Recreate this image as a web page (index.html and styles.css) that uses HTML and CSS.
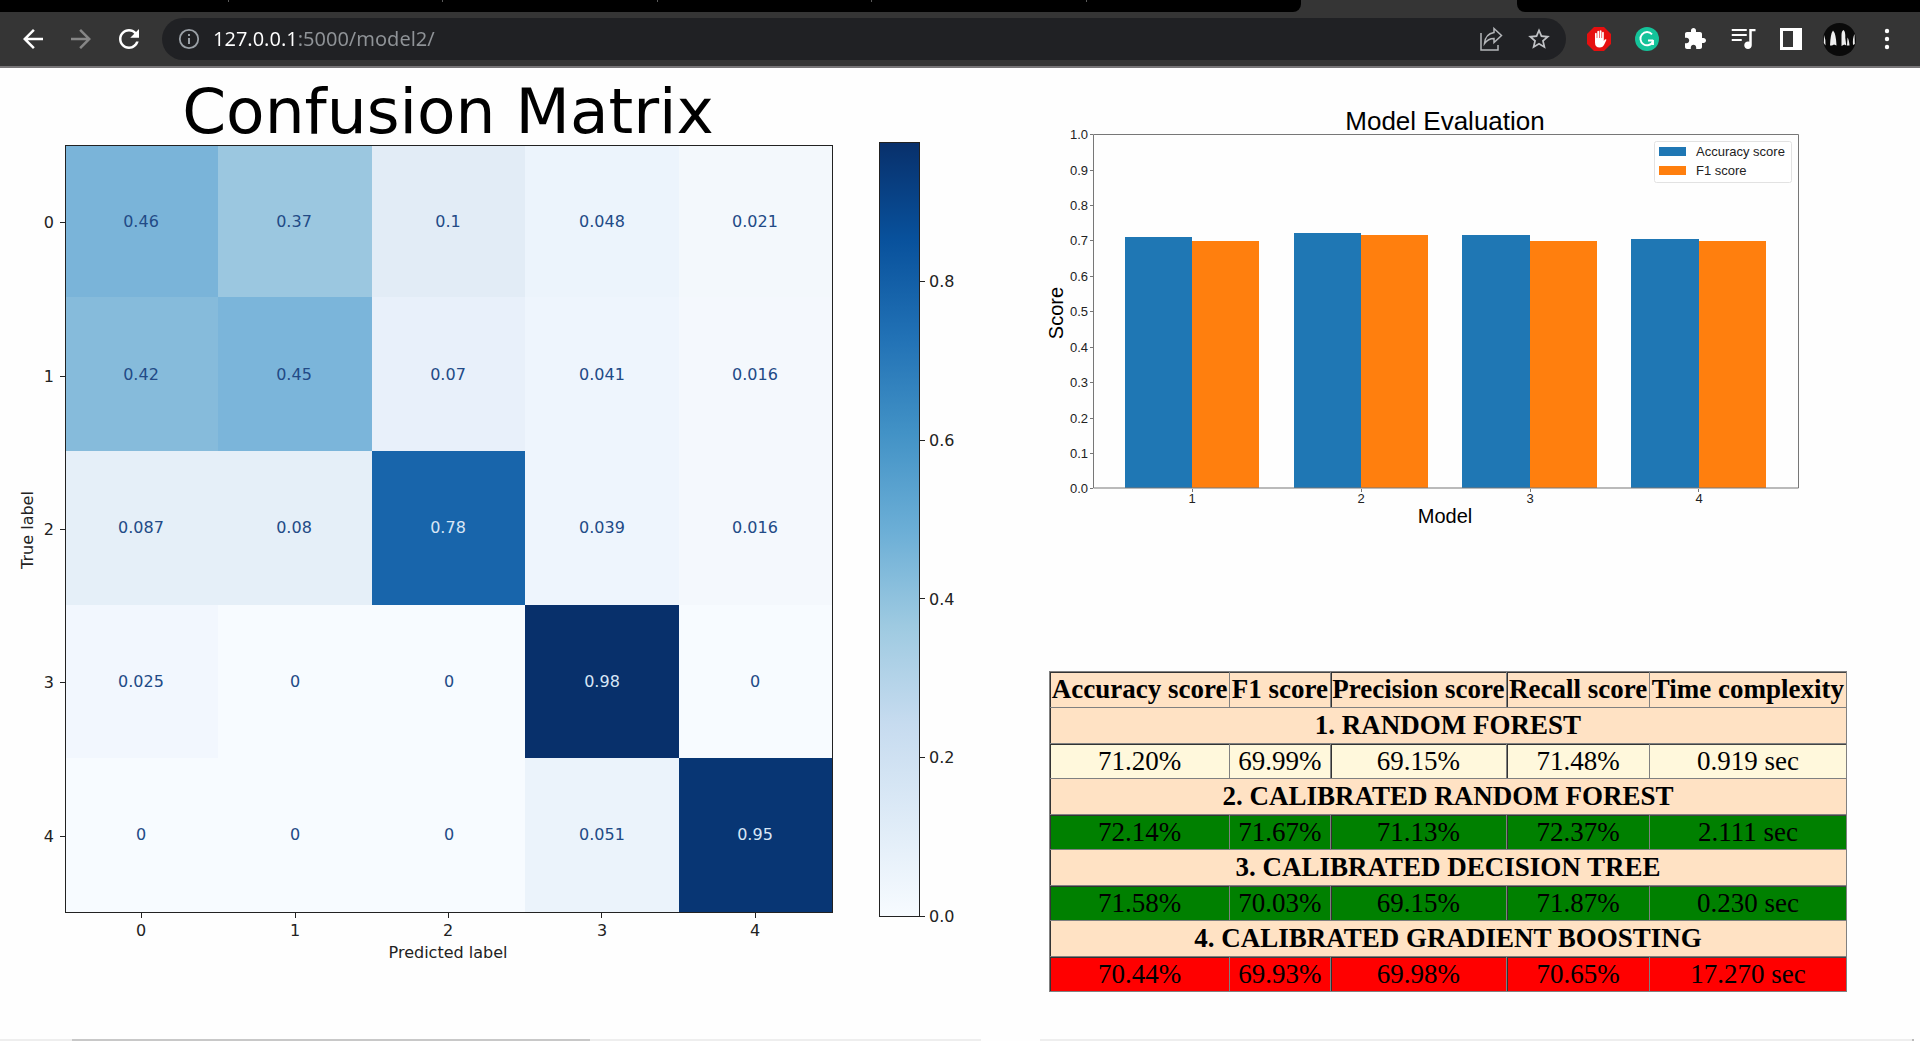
FILE: index.html
```html
<!DOCTYPE html>
<html lang="en">
<head>
<meta charset="utf-8">
<meta name="viewport" content="width=device-width, initial-scale=1">
<title>Model evaluation</title>
<link rel="stylesheet" href="styles.css">
</head>
<body>
<header class="browser">
  <div class="tabs">
    <div class="tabs-before"><span class="tab"></span><span class="tab"></span><span class="tab"></span><span class="tab"></span><span class="tab"></span><span class="tab"></span></div>
    <div class="tab-active"></div>
    <div class="tabs-after"></div>
  </div>
  <div class="toolbar">
    <div class="group">
      <button class="icon-button" type="button" aria-label="Back"><svg width="30" height="30" viewBox="0 0 24 24" fill="#fff"><path d="M20 11H7.83l5.59-5.59L12 4l-8 8 8 8 1.41-1.41L7.83 13H20v-2z"/></svg></button>
      <button class="icon-button" type="button" aria-label="Forward"><svg width="30" height="30" viewBox="0 0 24 24" fill="#868686"><path d="M4 11h12.17l-5.59-5.59L12 4l8 8-8 8-1.41-1.41L16.17 13H4v-2z"/></svg></button>
      <button class="icon-button" type="button" aria-label="Reload"><svg width="30" height="30" viewBox="0 0 24 24" fill="#fff"><path d="M17.65 6.35C16.2 4.9 14.21 4 12 4c-4.42 0-7.99 3.58-7.99 8s3.57 8 7.99 8c3.73 0 6.84-2.55 7.73-6h-2.08c-.82 2.33-3.04 4-5.65 4-3.31 0-6-2.69-6-6s2.69-6 6-6c1.66 0 3.14.69 4.22 1.78L13 11h7V4l-2.35 2.35z"/></svg></button>
    </div>
    <div class="omnibox">
      <button class="icon-button" type="button" aria-label="Site information"><svg width="24" height="24" viewBox="0 0 24 24"><circle cx="12" cy="12" r="9.2" fill="none" stroke="#9aa0a6" stroke-width="1.8"/><path fill="#9aa0a6" d="M11 7h2v2h-2zM11 11h2v6h-2z"/></svg></button>
      <input class="address" type="text" aria-label="Address" value="127.0.0.1:5000/model2/">
      <button class="icon-button" type="button" aria-label="Share"><svg width="24" height="28" viewBox="0 0 24 28" fill="none" stroke="#b4b6b9" stroke-width="1.5"><path d="M2 8v17h17v-5"/><path d="M15 3.500l7.500 7-7.500 7v-4c-4 0-7 1.500-9.500 5 .5-6 3.500-10 9.500-11z"/></svg></button>
      <button class="icon-button" type="button" aria-label="Bookmark"><svg width="26" height="26" viewBox="0 0 24 24" fill="#c0c2c5"><path d="M22 9.240l-7.190-.62L12 2 9.190 8.630 2 9.240l5.460 4.730L5.820 21 12 17.270 18.180 21l-1.630-7.030L22 9.240zM12 15.400l-3.760 2.270 1-4.280-3.320-2.880 4.380-.38L12 6.100l1.710 4.040 4.380.38-3.320 2.880 1 4.280L12 15.400z"/></svg></button>
    </div>
    <div class="group">
      <button class="icon-button" type="button" aria-label="Ad blocker"><svg width="24" height="24" viewBox="0 0 24 24"><path fill="#e60f0f" d="M7 0h10l7 7v10l-7 7H7l-7-7V7z"/><path fill="#fff" d="M8 13V6.500q1-1.300 1.700 0V11h.6V4.500q1-1.300 1.800 0V11h.6V3.800q1-1.300 1.800 0V11h.6V5.500q1-1.300 1.700 0V14l1-1.500q1.300-.8 1.700.3L17.500 17q-1.500 3.500-4.800 3.500Q8 20.500 8 15.500z"/></svg></button>
      <button class="icon-button" type="button" aria-label="Writing assistant"><svg width="24" height="24" viewBox="0 0 24 24"><circle cx="12" cy="12" r="12" fill="#15c39a"/><path d="M17 7.300A6.600 6.600 0 1 0 18 14.500M13 13.500h5.200M18 13v5" fill="none" stroke="#fff" stroke-width="1.900"/></svg></button>
      <button class="icon-button" type="button" aria-label="Extensions"><svg width="24" height="24" viewBox="0 0 24 24" fill="#fff"><path d="M20.500 11H19V7c0-1.100-.9-2-2-2h-4V3.500C13 2.120 11.880 1 10.500 1S8 2.120 8 3.500V5H4c-1.100 0-1.990.9-1.990 2v3.800H3.500c1.490 0 2.700 1.210 2.700 2.700s-1.210 2.700-2.700 2.700H2V20c0 1.100.9 2 2 2h3.800v-1.500c0-1.490 1.210-2.700 2.700-2.700 1.490 0 2.700 1.210 2.700 2.700V22H17c1.100 0 2-.9 2-2v-4h1.500c1.380 0 2.500-1.120 2.500-2.500S21.880 11 20.500 11z"/></svg></button>
      <button class="icon-button" type="button" aria-label="Media control"><svg width="30" height="30" viewBox="0 0 24 24" fill="#fff"><path d="M15 4H3v1.500h12V4zm0 4H3v1.500h12V8zM3 13.500h8V12H3v1.500zM17 4v10.180c-.31-.11-.65-.18-1-.18-1.660 0-3 1.340-3 3s1.340 3 3 3 3-1.340 3-3V5.700h3V4h-5z"/></svg></button>
      <button class="icon-button" type="button" aria-label="Side panel"><svg width="22" height="22" viewBox="0 0 22 22"><path fill="#fff" fill-rule="evenodd" d="M0 0h22v22H0zM3 3v16h10V3z"/></svg></button>
      <button class="icon-button" type="button" aria-label="Profile"><svg width="33" height="33" viewBox="0 0 33 33"><circle cx="16.500" cy="16.500" r="16.500" fill="#0a0a0a"/><path fill="#eee" d="M1 12q2 5 1.500 10.500L.8 20zM7 22.500q.5-12 3-15 3 3 3.500 15l-2.500-1-2 1zM18.500 23V12q0-4 2-5 2 1 1.800 8l1 7.500-2-1zM24 22.500l.5-8q1.500 2 2 8zM31.500 11q-2 4-1.500 11l1.800-1z"/></svg></button>
      <button class="icon-button" type="button" aria-label="Menu"><svg width="6" height="22" viewBox="0 0 6 22" fill="#fff"><circle cx="3" cy="3" r="2.200"/><circle cx="3" cy="11" r="2.200"/><circle cx="3" cy="19" r="2.200"/></svg></button>
    </div>
  </div>
</header>

<main class="page">
  <section class="pane">
    <svg class="chart matrix" viewBox="0 0 1000 920" role="img" aria-label="Confusion matrix">
      <defs>
        <linearGradient id="blues" x1="0" y1="1" x2="0" y2="0">
          <stop offset="0" stop-color="#f7fbff"/><stop offset=".125" stop-color="#deebf7"/><stop offset=".25" stop-color="#c6dbef"/><stop offset=".375" stop-color="#9ecae1"/><stop offset=".5" stop-color="#6baed6"/><stop offset=".625" stop-color="#4292c6"/><stop offset=".75" stop-color="#2171b5"/><stop offset=".875" stop-color="#08519c"/><stop offset="1" stop-color="#08306b"/>
        </linearGradient>
      </defs>
      <text class="matrix-title" x="448" y="65">Confusion Matrix</text>
      <g class="cells">
        <rect x="65" y="77" width="153" height="152" fill="#7ab4d9"/><rect x="218" y="77" width="154" height="152" fill="#9bc7e0"/><rect x="372" y="77" width="153" height="152" fill="#e2ecf6"/><rect x="525" y="77" width="154" height="152" fill="#ecf4fc"/><rect x="679" y="77" width="153" height="152" fill="#f3f8fc"/>
        <rect x="65" y="229" width="153" height="154" fill="#86bbdb"/><rect x="218" y="229" width="154" height="154" fill="#7bb5da"/><rect x="372" y="229" width="153" height="154" fill="#e8f0fa"/><rect x="525" y="229" width="154" height="154" fill="#eef5fd"/><rect x="679" y="229" width="153" height="154" fill="#f4f8fd"/>
        <rect x="65" y="383" width="153" height="154" fill="#e5eff8"/><rect x="218" y="383" width="154" height="154" fill="#e5eff8"/><rect x="372" y="383" width="153" height="154" fill="#1865ab"/><rect x="525" y="383" width="154" height="154" fill="#eef5fd"/><rect x="679" y="383" width="153" height="154" fill="#f4f8fd"/>
        <rect x="65" y="537" width="153" height="153" fill="#f2f7fe"/><rect x="218" y="537" width="307" height="153" fill="#f7fbff"/><rect x="525" y="537" width="154" height="153" fill="#08306b"/><rect x="679" y="537" width="153" height="153" fill="#f7fbff"/>
        <rect x="65" y="690" width="460" height="154" fill="#f7fbff"/><rect x="525" y="690" width="154" height="154" fill="#ebf3fb"/><rect x="679" y="690" width="153" height="154" fill="#083674"/>
      </g>
      <g class="line">
        <rect x="65.500" y="77.500" width="767" height="767" fill="none"/>
        <rect x="879.500" y="74.500" width="40" height="774" fill="url(#blues)"/>
        <path d="M60 154.500h5M60 308.500h5M60 461.500h5M60 614.500h5M60 768.500h5M141.500 845v5M295.500 845v5M448.500 845v5M601.500 845v5M755.500 845v5M920 213.500h5M920 372.500h5M920 530.500h5M920 689.500h5M920 848.500h5"/>
      </g>
      <g class="cell-text">
        <text x="141" y="159">0.46</text><text x="294" y="159">0.37</text><text x="448" y="159">0.1</text><text x="602" y="159">0.048</text><text x="755" y="159">0.021</text>
        <text x="141" y="312">0.42</text><text x="294" y="312">0.45</text><text x="448" y="312">0.07</text><text x="602" y="312">0.041</text><text x="755" y="312">0.016</text>
        <text x="141" y="465">0.087</text><text x="294" y="465">0.08</text><text class="light" x="448" y="465">0.78</text><text x="602" y="465">0.039</text><text x="755" y="465">0.016</text>
        <text x="141" y="619">0.025</text><text x="295" y="619">0</text><text x="449" y="619">0</text><text class="light" x="602" y="619">0.98</text><text x="755" y="619">0</text>
        <text x="141" y="772">0</text><text x="295" y="772">0</text><text x="449" y="772">0</text><text x="602" y="772">0.051</text><text class="light" x="755" y="772">0.95</text>
      </g>
      <g class="tick middle">
        <text x="141" y="868">0</text><text x="295" y="868">1</text><text x="448" y="868">2</text><text x="602" y="868">3</text><text x="755" y="868">4</text>
        <text x="448" y="890">Predicted label</text>
        <text transform="translate(33 462) rotate(-90)">True label</text>
      </g>
      <g class="tick end">
        <text x="54" y="160">0</text><text x="54" y="314">1</text><text x="54" y="467">2</text><text x="54" y="620">3</text><text x="54" y="774">4</text>
      </g>
      <g class="tick">
        <text x="929" y="219">0.8</text><text x="929" y="378">0.6</text><text x="929" y="537">0.4</text><text x="929" y="695">0.2</text><text x="929" y="854">0.0</text>
      </g>
    </svg>
  </section>

  <section class="pane results">
    <svg class="chart bars" viewBox="0 0 920 560" role="img" aria-label="Model evaluation">
      <text class="bars-title" x="445" y="62">Model Evaluation</text>
      <g fill="#1f77b4">
        <rect x="125" y="169" width="67" height="251"/><rect x="294" y="165" width="67" height="255"/><rect x="462" y="167" width="68" height="253"/><rect x="631" y="171" width="68" height="249"/>
      </g>
      <g fill="#ff7f0e">
        <rect x="192" y="173" width="67" height="247"/><rect x="361" y="167" width="67" height="253"/><rect x="530" y="173" width="67" height="247"/><rect x="699" y="173" width="67" height="247"/>
      </g>
      <path class="axis" d="M93.500 66.500h705v353.500h-705zM90 66.500h3M90 102.500h3M90 137.500h3M90 172.500h3M90 208.500h3M90 243.500h3M90 279.500h3M90 314.500h3M90 350.500h3M90 385.500h3M90 420.500h3M192.500 421v3M361.500 421v3M530.500 421v3M698.500 421v3"/>
      <g class="bars-tick end">
        <text x="88" y="71">1.0</text><text x="88" y="107">0.9</text><text x="88" y="142">0.8</text><text x="88" y="177">0.7</text><text x="88" y="213">0.6</text><text x="88" y="248">0.5</text><text x="88" y="284">0.4</text><text x="88" y="319">0.3</text><text x="88" y="355">0.2</text><text x="88" y="390">0.1</text><text x="88" y="425">0.0</text>
      </g>
      <g class="bars-tick middle">
        <text x="192" y="435">1</text><text x="361" y="435">2</text><text x="530" y="435">3</text><text x="699" y="435">4</text>
      </g>
      <g class="bars-label middle">
        <text x="445" y="455">Model</text>
        <text transform="translate(63 245) rotate(-90)">Score</text>
      </g>
      <rect x="654.500" y="73.500" width="137" height="41" rx="2" fill="#fff" stroke="#e2e2e2"/>
      <rect x="659" y="79" width="27" height="9" fill="#1f77b4"/>
      <rect x="659" y="98" width="27" height="9" fill="#ff7f0e"/>
      <g class="bars-tick"><text x="696" y="88">Accuracy score</text><text x="696" y="107">F1 score</text></g>
    </svg>

    <table class="scores">
      <thead>
        <tr><th scope="col">Accuracy score</th><th scope="col">F1 score</th><th scope="col">Precision score</th><th scope="col">Recall score</th><th scope="col">Time complexity</th></tr>
      </thead>
      <tbody>
        <tr class="name"><th colspan="5">1. RANDOM FOREST</th></tr>
        <tr class="plain"><td>71.20%</td><td>69.99%</td><td>69.15%</td><td>71.48%</td><td>0.919 sec</td></tr>
        <tr class="name"><th colspan="5">2. CALIBRATED RANDOM FOREST</th></tr>
        <tr class="good"><td>72.14%</td><td>71.67%</td><td>71.13%</td><td>72.37%</td><td>2.111 sec</td></tr>
        <tr class="name"><th colspan="5">3. CALIBRATED DECISION TREE</th></tr>
        <tr class="good"><td>71.58%</td><td>70.03%</td><td>69.15%</td><td>71.87%</td><td>0.230 sec</td></tr>
        <tr class="name"><th colspan="5">4. CALIBRATED GRADIENT BOOSTING</th></tr>
        <tr class="bad"><td>70.44%</td><td>69.93%</td><td>69.98%</td><td>70.65%</td><td>17.270 sec</td></tr>
      </tbody>
    </table>
  </section>
</main>

<footer class="scrollbars">
  <div class="track"><div class="thumb"></div></div>
  <div class="track track-right"></div>
</footer>
</body>
</html>
```
FILE: styles.css
```css
* { box-sizing: border-box; }

body {
  margin: 0;
  min-height: 100vh;
  display: flex;
  flex-direction: column;
  background: #fefefe;
  color: #000;
  font-family: "Liberation Serif", serif;
}

/* Browser frame */
.browser { background: #353535; border-bottom: 2px solid #777577; }

.tabs { display: grid; grid-template-columns: 1301fr 216fr 403fr; height: 12px; }
.tabs-before { display: flex; padding-left: 14px; background: #000; border-bottom-right-radius: 8px; }
.tabs-after { background: #000; border-bottom-left-radius: 8px; }
.tab { flex: 1; background: linear-gradient(#5a5a5a, #5a5a5a) right top / 1px 2px no-repeat; }
.tab:last-child { background: none; }

.toolbar { display: flex; align-items: center; gap: 9px; height: 54px; padding: 0 9px; }
.group { display: flex; }

.icon-button {
  display: flex;
  align-items: center;
  justify-content: center;
  flex: none;
  width: 48px;
  height: 42px;
  padding: 0;
  border: 0;
  background: none;
}

.omnibox {
  flex: 1;
  display: flex;
  align-items: center;
  height: 42px;
  padding: 0 3px;
  border-radius: 21px;
  background: #202124;
}

.address {
  flex: 1;
  min-width: 0;
  height: 32px;
  padding: 0;
  border: 0;
  outline: 0;
  color: #fff;
  font: 20px/32px "Noto Sans", sans-serif;
  background: linear-gradient(90deg, #fff 81px, #8f9397 81px);
  -webkit-background-clip: text;
  background-clip: text;
  -webkit-text-fill-color: transparent;
}

/* Page */
.page {
  flex: 1;
  display: grid;
  grid-template-columns: minmax(0, 25fr) minmax(0, 23fr);
  align-items: start;
}

.chart { display: block; width: 100%; height: auto; }

.matrix { font-family: "DejaVu Sans", sans-serif; font-size: 16px; }
.matrix-title { font-size: 63px; text-anchor: middle; }
.cells { shape-rendering: crispEdges; }
.line { fill: none; stroke: #222; stroke-width: 1px; }
.cell-text { fill: #224a86; text-anchor: middle; }
.cell-text .light { fill: #d8e6f6; }
.tick { fill: #222; }
.middle { text-anchor: middle; }
.end { text-anchor: end; }

.bars { font-family: "Liberation Sans", sans-serif; }
.bars-title { font-size: 26px; text-anchor: middle; }
.bars-tick { font-size: 13px; fill: #222; }
.bars-label { font-size: 20px; }
.axis { fill: none; stroke: #777; stroke-width: 1px; }

.scores {
  width: 798px;
  margin: 43px 0 0 49px;
  border-collapse: collapse;
  font-size: 27px;
  line-height: 31px;
}
.scores th, .scores td {
  height: 35px;
  padding: 0 1px;
  border: 1px solid #808080;
  text-align: center;
  white-space: nowrap;
}
.scores th { height: 36px; background: #ffe2c4; }
.scores .name th { box-shadow: inset 1px 0 #333; }
.scores thead th, .scores td { box-shadow: inset 0 1px #444; }
.scores thead th:nth-child(1), .scores thead th:nth-child(3), .scores thead th:nth-child(4),
.scores td:nth-child(1), .scores td:nth-child(3), .scores td:nth-child(4) {
  box-shadow: inset 1px 1px #333;
}
.plain td { background: #fff8dc; }
.good td { background: #008000; }
.bad td { background: #f00; }

/* Horizontal scrollbars of the two panes */
.scrollbars { display: grid; grid-template-columns: 981fr 874fr; gap: 59px; padding-right: 6px; }
.track { height: 2px; padding-left: 72px; background: #eee; }
.track-right { padding: 0; border-right: 2px solid #bbb; }
.thumb { width: 57%; height: 2px; background: #c8c8c8; }
```
